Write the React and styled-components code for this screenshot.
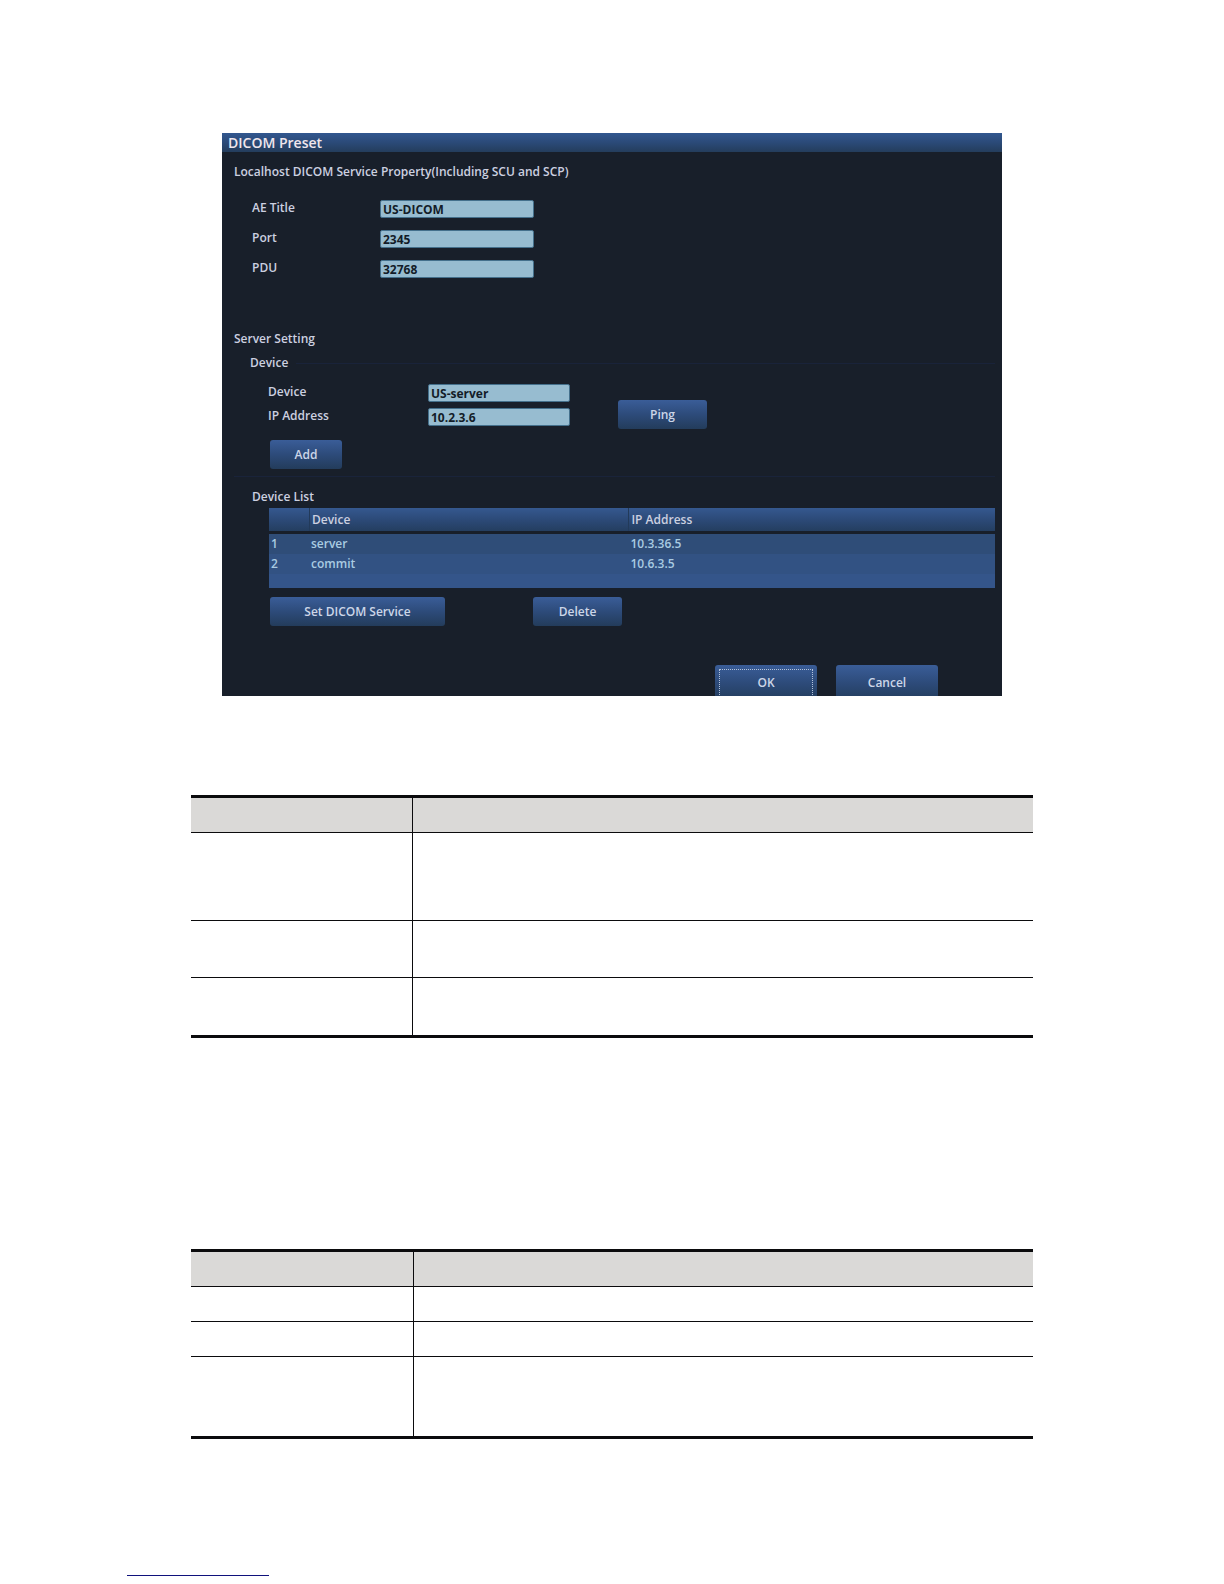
import React from 'react';
import styled, { createGlobalStyle } from 'styled-components';

const GlobalStyle = createGlobalStyle`
  * {
    box-sizing: border-box;
  }

  body {
    margin: 0;
    background: #fff;
    font-family: "Open Sans", "Noto Sans", sans-serif;
  }
`;

// Page

const Page = styled.main`
  display: flex;
  flex-direction: column;
  min-height: 100vh;
  padding: 133px 191px 8px;
`;

// Dialog

const Dialog = styled.section`
  margin: 0 31px;
  overflow: hidden;
  background: #181f2a;
  color: #ccd0e0;
  font-size: 12px;
  font-weight: 600;
  line-height: 16px;
`;

const TitleBar = styled.h1`
  margin: 0;
  padding-left: 6px;
  background: linear-gradient(#32578f, #2b4a78 50%, #243d5c);
  color: #f0e6ec;
  font-size: 14px;
  font-weight: 600;
  line-height: 19px;
`;

const Content = styled.form`
  display: flex;
  flex-direction: column;
  padding: 12px 7px 0 12px;
`;

const SectionTitle = styled.h2`
  margin: ${(props) => props.$top || 0}px 0 0;
  font-size: 12px;
  font-weight: 600;
`;

const Group = styled.div`
  display: flex;
  flex-direction: column;
  margin-top: ${(props) => props.$top}px;
  padding-left: ${(props) => props.$indent}px;
`;

const GroupTitle = styled.h3`
  display: flex;
  align-items: center;
  gap: 8px;
  margin: ${(props) => props.$top || 0}px 0 0;
  padding-left: ${(props) => props.$indent}px;
  font-size: 12px;
  font-weight: 600;

  &::after {
    content: "";
    flex: 1;
    height: 1px;
    background: ${(props) => (props.$line ? '#19233a' : 'transparent')};
  }
`;

const Fields = styled.div`
  display: grid;
  grid-template-columns: ${(props) => props.$columns};
  row-gap: ${(props) => props.$gap}px;
`;

const Label = styled.label`
  line-height: 15px;
`;

const TextInput = styled.input`
  width: 100%;
  height: 18px;
  padding: 1px 2px 0;
  border: 1px solid #44708c;
  border-radius: 2px;
  background: #97bcd0;
  color: #131c28;
  font: 700 12px/15px "Open Sans", "Noto Sans", sans-serif;
`;

const DeviceRow = styled.div`
  display: flex;
  align-items: flex-start;
  gap: 48px;
`;

const Button = styled.button`
  width: ${(props) => props.$width}px;
  height: 29px;
  padding: 0;
  border: none;
  border-radius: 3px;
  background: linear-gradient(#3a5d98, #2d4b7a 50%, #233c5b);
  color: #ccd6e8;
  font: 600 12px/16px "Open Sans", "Noto Sans", sans-serif;
  cursor: pointer;
`;

const PingButton = styled(Button)`
  margin-top: 16px;
`;

const AddButton = styled(Button)`
  margin: 11px 0 0 2px;
`;

const Divider = styled.hr`
  width: 100%;
  height: 1px;
  margin: 7px 0 12px;
  border: none;
  background: #19233a;
`;

const ListFrame = styled.div`
  margin: 3px 0 9px 35px;
  padding-bottom: 14px;
  background: #34558a;
`;

const DeviceTable = styled.table`
  width: 100%;
  border-spacing: 0;
  table-layout: fixed;
  text-align: left;

  th {
    height: 26px;
    padding: 0 0 0 3px;
    border-bottom: 3px solid #181f2a;
    background: linear-gradient(#35588f, #2c4a78 50%, #243e60) padding-box;
    font-weight: 600;
  }

  th + th {
    box-shadow: inset 1px 0 #223a5a;
  }

  td {
    height: 20px;
    padding: 0 0 0 2px;
    background: #325283;
    color: #a9cbe2;
  }

  tr:first-child td {
    background: #2f4d78;
  }
`;

const Actions = styled.div`
  display: flex;
  gap: 88px;
  padding-left: 36px;
`;

const Footer = styled.div`
  display: flex;
  justify-content: flex-end;
  gap: 19px;
  height: 31px;
  margin-top: 39px;
  padding-right: 57px;
  overflow: hidden;
`;

const FooterButton = styled(Button)`
  height: 36px;
  outline: ${(props) => (props.$focused ? '1px dotted #b4c4dc' : 'none')};
  outline-offset: -5px;
`;

// Document tables

const DocTable = styled.table`
  width: 100%;
  margin-top: ${(props) => props.$top}px;
  border-top: 3px solid #0b0b0d;
  border-bottom: 3px solid #0b0b0d;
  border-spacing: 0;
  table-layout: fixed;

  th,
  td {
    padding: 0;
    border-bottom: 1px solid #0b0b0d;
  }

  th {
    background: #dad9d7;
  }

  th:first-child,
  td:first-child {
    border-right: 1px solid #0b0b0d;
  }

  tbody tr:last-child td {
    border-bottom: none;
  }
`;

const Row = styled.tr`
  height: ${(props) => props.$height}px;
`;

const FootLink = styled.a`
  width: 142px;
  height: 14px;
  margin: auto 0 0 -64px;
  border-bottom: 1px solid #10127c;
`;

const hostFields = [
  { id: 'ae-title', label: 'AE Title', value: 'US-DICOM' },
  { id: 'port', label: 'Port', value: '2345' },
  { id: 'pdu', label: 'PDU', value: '32768' },
];

const deviceFields = [
  { id: 'device', label: 'Device', value: 'US-server' },
  { id: 'ip-address', label: 'IP Address', value: '10.2.3.6' },
];

const devices = [
  { name: 'server', ip: '10.3.36.5' },
  { name: 'commit', ip: '10.6.3.5' },
];

const FieldList = ({ fields, columns, gap }) => (
  <Fields $columns={columns} $gap={gap}>
    {fields.map((field) => (
      <React.Fragment key={field.id}>
        <Label htmlFor={field.id}>{field.label}</Label>
        <TextInput id={field.id} type="text" defaultValue={field.value} />
      </React.Fragment>
    ))}
  </Fields>
);

const RuledTable = ({ top, firstColumn, rows }) => (
  <DocTable $top={top}>
    <colgroup>
      <col style={{ width: firstColumn }} />
      <col />
    </colgroup>
    <thead>
      <Row $height={35}>
        <th />
        <th />
      </Row>
    </thead>
    <tbody>
      {rows.map((height, index) => (
        <Row key={index} $height={height}>
          <td />
          <td />
        </Row>
      ))}
    </tbody>
  </DocTable>
);

const App = () => {
  return (
    <>
      <GlobalStyle />
      <Page>
        <Dialog>
          <TitleBar>DICOM Preset</TitleBar>
          <Content onSubmit={(e) => e.preventDefault()}>
            {/* Localhost */}
            <SectionTitle>Localhost DICOM Service Property(Including SCU and SCP)</SectionTitle>
            <Group $top={20} $indent={18}>
              <FieldList fields={hostFields} columns="128px 154px" gap={12} />
            </Group>

            {/* Server */}
            <SectionTitle $top={53}>Server Setting</SectionTitle>
            <GroupTitle $top={8} $indent={16} $line>Device</GroupTitle>
            <Group $top={13} $indent={34}>
              <DeviceRow>
                <FieldList fields={deviceFields} columns="160px 142px" gap={6} />
                <PingButton type="button" $width={89}>Ping</PingButton>
              </DeviceRow>
              <AddButton type="button" $width={72}>Add</AddButton>
            </Group>
            <Divider />

            {/* Device list */}
            <GroupTitle $indent={18}>Device List</GroupTitle>
            <ListFrame>
              <DeviceTable>
                <colgroup>
                  <col style={{ width: '40px' }} />
                  <col style={{ width: '44%' }} />
                  <col />
                </colgroup>
                <thead>
                  <tr>
                    <th />
                    <th>Device</th>
                    <th>IP Address</th>
                  </tr>
                </thead>
                <tbody>
                  {devices.map((device, index) => (
                    <tr key={device.name}>
                      <td>{index + 1}</td>
                      <td>{device.name}</td>
                      <td>{device.ip}</td>
                    </tr>
                  ))}
                </tbody>
              </DeviceTable>
            </ListFrame>
            <Actions>
              <Button type="button" $width={175}>Set DICOM Service</Button>
              <Button type="button" $width={89}>Delete</Button>
            </Actions>
            <Footer>
              <FooterButton type="submit" $width={102} $focused>OK</FooterButton>
              <FooterButton type="button" $width={102}>Cancel</FooterButton>
            </Footer>
          </Content>
        </Dialog>

        <RuledTable top={99} firstColumn="222px" rows={[88, 57, 57]} />
        <RuledTable top={211} firstColumn="223px" rows={[35, 35, 79]} />
        <FootLink href="#top" aria-label="Back to top" />
      </Page>
    </>
  );
};

export default App;
